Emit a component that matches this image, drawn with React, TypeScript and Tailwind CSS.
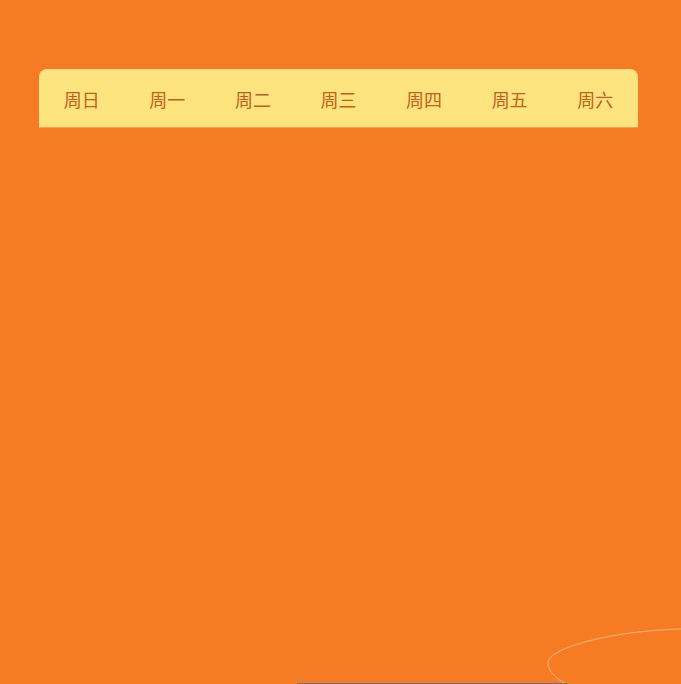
const days = ['周日', '周一', '周二', '周三', '周四', '周五', '周六']

function App() {
  return (
    <div className="relative h-[684px] w-full overflow-hidden bg-[#f57c23] font-['Noto_Sans_CJK_SC',sans-serif]">
      <div className="px-[39px] pt-[69px] pr-[43px]">
        <div className="grid h-[59px] grid-cols-7 items-center rounded-t-[8px] border-b border-[#f3a24a] bg-[#fee47f] pt-px">
          {days.map(d => (
            <div key={d} className="text-center text-[18px] leading-none text-[#c25f1a]">
              {d}
            </div>
          ))}
        </div>
      </div>

      {/* decorative curve, bottom right */}
      <svg className="absolute left-0 top-0 pointer-events-none" width="681" height="684">
        <path
          d="M 681 629 C 610 631, 548 648, 548 663 C 548 671, 555 678, 566 684"
          fill="none"
          stroke="#fbb77f"
          strokeWidth="1"
        />
      </svg>
      <div className="absolute bottom-0 left-[297px] h-px w-[270px] bg-[#6f7079]" />
    </div>
  )
}

export default App
